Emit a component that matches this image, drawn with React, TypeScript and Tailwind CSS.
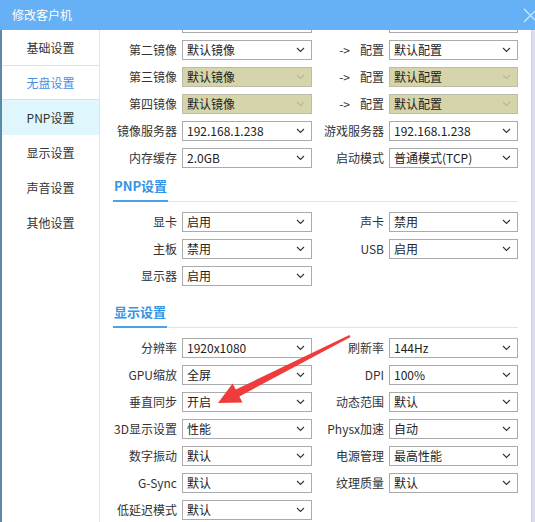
import React from "react";

type Field = { label: string; value: string; disabled?: boolean; arrow?: boolean };
type Row = { left: Field; right?: Field };

const font = { fontFamily: '"Noto Sans CJK SC", "Noto Sans", sans-serif' };

const mirrorRows: Row[] = [
    { left: { label: "第二镜像", value: "默认镜像" }, right: { label: "配置", value: "默认配置", arrow: true } },
    { left: { label: "第三镜像", value: "默认镜像", disabled: true }, right: { label: "配置", value: "默认配置", arrow: true, disabled: true } },
    { left: { label: "第四镜像", value: "默认镜像", disabled: true }, right: { label: "配置", value: "默认配置", arrow: true, disabled: true } },
    { left: { label: "镜像服务器", value: "192.168.1.238" }, right: { label: "游戏服务器", value: "192.168.1.238" } },
    { left: { label: "内存缓存", value: "2.0GB" }, right: { label: "启动模式", value: "普通模式(TCP)" } },
];

const pnpRows: Row[] = [
    { left: { label: "显卡", value: "启用" }, right: { label: "声卡", value: "禁用" } },
    { left: { label: "主板", value: "禁用" }, right: { label: "USB", value: "启用" } },
    { left: { label: "显示器", value: "启用" } },
];

const displayRows: Row[] = [
    { left: { label: "分辨率", value: "1920x1080" }, right: { label: "刷新率", value: "144Hz" } },
    { left: { label: "GPU缩放", value: "全屏" }, right: { label: "DPI", value: "100%" } },
    { left: { label: "垂直同步", value: "开启" }, right: { label: "动态范围", value: "默认" } },
    { left: { label: "3D显示设置", value: "性能" }, right: { label: "Physx加速", value: "自动" } },
    { left: { label: "数字振动", value: "默认" }, right: { label: "电源管理", value: "最高性能" } },
    { left: { label: "G-Sync", value: "默认" }, right: { label: "纹理质量", value: "默认" } },
    { left: { label: "低延迟模式", value: "默认" } },
];

const menu = ["基础设置", "无盘设置", "PNP设置", "显示设置", "声音设置", "其他设置"];

function Chevron({ muted }: { muted?: boolean }) {
    return (
        <svg width="9" height="6" viewBox="0 0 9 6" className="shrink-0">
            <path d="M1 1 L4.5 4.5 L8 1" fill="none" stroke={muted ? "#b9b89c" : "#333"} strokeWidth="1.1" />
        </svg>
    );
}

function Select({ value, disabled }: { value: string; disabled?: boolean }) {
    return (
        <div
            className={`h-[20px] flex items-center justify-between pl-[4px] pr-[6px] border text-[12px] text-[#222] leading-none ${
                disabled ? "bg-[#d6d4aa] border-[#bdbcaa]" : "bg-white border-[#ababab]"
            }`}
        >
            <span className="whitespace-nowrap">{value}</span>
            <Chevron muted={disabled} />
        </div>
    );
}

function FormRow({ row }: { row: Row }) {
    return (
        <div className="grid grid-cols-[64px_130px_67px_129px] gap-x-[5px] items-center h-[20px]">
            <div className="text-right text-[12px] text-[#333] whitespace-nowrap">{row.left.label}</div>
            <Select value={row.left.value} disabled={row.left.disabled} />
            {row.right ? (
                <>
                    <div className="text-right text-[12px] text-[#333] whitespace-nowrap">
                        {row.right.arrow && <span className="mr-[10px]">-&gt;</span>}
                        {row.right.label}
                    </div>
                    <Select value={row.right.value} disabled={row.right.disabled} />
                </>
            ) : null}
        </div>
    );
}

function Heading({ title, className }: { title: string; className?: string }) {
    return (
        <div className={`w-[405px] border-b border-[#e4e4e4] flex ${className ?? ""}`}>
            <span className="text-[13px] font-bold text-[#3494e6] leading-[16px] pb-[6px] border-b-2 border-[#4aa3ea] -mb-px px-[1px]">
                {title}
            </span>
        </div>
    );
}

export default function App() {
    return (
        <div className="relative w-[535px] h-[522px] overflow-hidden bg-white flex flex-col" style={font}>
            {/* title bar */}
            <div className="h-[30px] shrink-0 bg-[#66b1f5] flex items-center justify-between pl-[12px]">
                <span className="text-[12px] text-white">修改客户机</span>
                <svg width="15" height="15" viewBox="0 0 15 15" className="mr-[-3px]">
                    <path d="M1 1 L14 14 M14 1 L1 14" stroke="#d6eafd" strokeWidth="1.2" />
                </svg>
            </div>

            <div className="flex flex-1 min-h-0 border-l-2 border-[#5a8ba6]">
                {/* side menu */}
                <div className="w-[98px] shrink-0 border-r border-[#e2e2ec] flex flex-col">
                    {menu.map((m, i) => (
                        <div
                            key={m}
                            className={`h-[35px] flex items-center justify-center text-[12px] ${
                                i === 1
                                    ? "text-[#4a90e2] border-y border-[#e0e0ea]"
                                    : i === 2
                                    ? "bg-[#dff6fc] text-[#333]"
                                    : "text-[#333]"
                            }`}
                        >
                            {m}
                        </div>
                    ))}
                </div>

                {/* content */}
                <div className="flex-1 min-w-0 overflow-hidden">
                    <div className="mt-[-17px] pl-[13px] flex flex-col">
                        <div className="flex flex-col gap-[7px]">
                            {/* row scrolled mostly out of view */}
                            <div className="grid grid-cols-[64px_130px_67px_129px] gap-x-[5px] h-[20px]">
                                <div />
                                <div className="border border-[#ababab]" />
                                <div />
                                <div className="border border-[#ababab]" />
                            </div>
                            {mirrorRows.map((r, i) => (
                                <FormRow key={i} row={r} />
                            ))}
                        </div>
                        <Heading title="PNP设置" className="mt-[10px] mb-[10px]" />
                        <div className="flex flex-col gap-[7px]">
                            {pnpRows.map((r, i) => (
                                <FormRow key={i} row={r} />
                            ))}
                        </div>
                        <Heading title="显示设置" className="mt-[18px] mb-[10px]" />
                        <div className="flex flex-col gap-[7px]">
                            {displayRows.map((r, i) => (
                                <FormRow key={i} row={r} />
                            ))}
                        </div>
                    </div>
                </div>

                {/* scroll track */}
                <div className="w-[4px] shrink-0 bg-[#dcdcf3] border-l border-[#cfcfee]" />
            </div>

            {/* annotation arrow */}
            <svg className="absolute left-0 top-0 pointer-events-none" width="535" height="522" viewBox="0 0 535 522">
                <polygon
                    points="350.6,337 239.4,396.4 242.5,402.5 218,403 232.6,383.6 235.8,389.6 349.4,335"
                    fill="#ef3b3b"
                />
            </svg>
        </div>
    );
}
